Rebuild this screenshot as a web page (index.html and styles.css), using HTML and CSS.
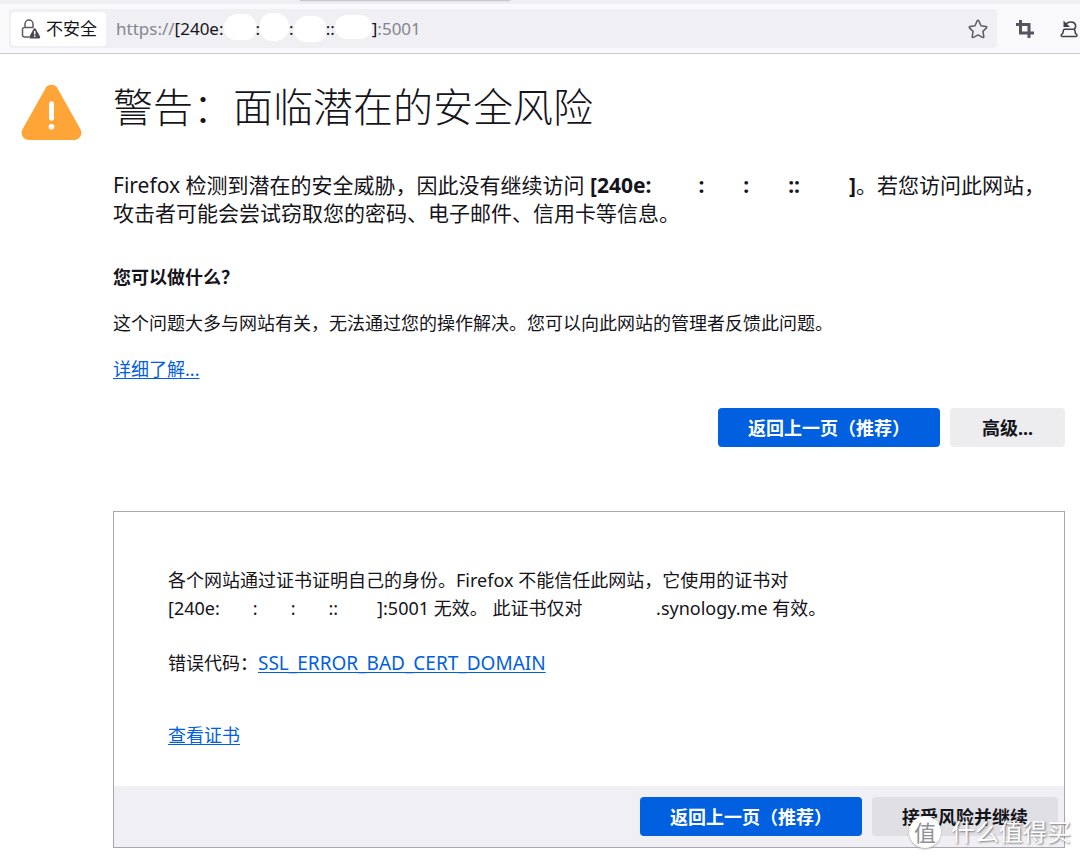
FILE: index.html
```
<!DOCTYPE html>
<html lang="zh-CN">
<head>
<meta charset="utf-8">
<meta name="viewport" content="width=device-width, initial-scale=1">
<title>警告：面临潜在的安全风险</title>
<link rel="stylesheet" href="styles.css">
</head>
<body>
<div class="tabstrip"><div class="tab"></div></div>
<header class="toolbar">
  <div class="urlbar">
    <button class="identity" type="button">
      <svg class="identity-icon" viewBox="0 0 20 22" fill="none" aria-hidden="true">
        <path d="M4 9.500V6a4 4 0 0 1 8 0V9.500M8 19H3.500a2 2 0 0 1-2-2v-5.500a2 2 0 0 1 2-2H12.500" stroke="#5b5b66" stroke-width="1.500"/>
        <path d="M12.700 10.800c.5-.9 1.500-.9 2 0l4.300 7.700c.5 1-.1 2-1 2H9.400c-.9 0-1.500-1-1-2z" fill="#4a4a55"/>
        <path d="M13.700 13v3.500M13.700 17.500v1.500" stroke="#fff" stroke-width="1.500"/>
      </svg>
      <span>不安全</span>
    </button>
    <div class="address"><span class="dim">https://</span>[240e:<span class="mask"></span>:<span class="mask mask-mid"></span>:<span class="mask mask-low"></span>::<span class="mask mask-wide"></span>]<span class="dim">:5001</span></div>
    <button class="icon-button" type="button" aria-label="收藏">
      <svg width="20" height="20" viewBox="0 0 20 20" fill="none" stroke="#5b5b66" stroke-width="1.500" stroke-linejoin="round" aria-hidden="true"><path d="M9.200 1.800Q10 .500 10.800 1.800L13 6.700L18 7.400Q19.400 7.800 18.500 8.900L14.900 12.400L15.800 17.500Q15.900 19 14.500 18.400L10 15.900L5.500 18.400Q4.100 19 4.200 17.500L5.100 12.400L1.500 8.900Q.600 7.800 2 7.400L7 6.700Z"/></svg>
    </button>
  </div>
  <div class="tools">
    <button class="icon-button" type="button" aria-label="截图">
      <svg width="18" height="18" viewBox="0 0 18 18" fill="none" stroke="#55555f" stroke-width="3" aria-hidden="true"><path d="M4.500 0v13H18M0 4.500h13V18"/></svg>
    </button>
    <button class="icon-button" type="button" aria-label="恢复">
      <svg width="18" height="18" viewBox="0 0 18 18" fill="none" stroke="#3f3f49" stroke-width="1.500" aria-hidden="true"><path d="M6 4C9 1 14.500 1.500 15.500 5c.5 2-.3 3.500-1.500 4.500M5 9.200h8.500c.5 0 1 .3 1.200.8l.8 3.500 1.200.8c.4.300.5 2.200-.5 2.200H2c-1 0-1-1.900-.5-2.200l1.200-.8.8-3.500c.2-.5.8-.8 1.500-.8z"/><path d="M3.500.5v6.500H10z" fill="#3f3f49" stroke="none"/></svg>
    </button>
  </div>
</header>
<main class="page">
  <svg class="warning" viewBox="0 0 62 58" aria-hidden="true"><path d="M24.500 5C27-.500 35-.500 37.500 5L60.500 46C63 51 60 57 54 57H8C2 57-1 51 1.500 46Z" fill="#ffa436"/><path d="M31 20v15" stroke="#fff" stroke-width="5" stroke-linecap="round"/><circle cx="31" cy="43.500" r="2.900" fill="#fff"/></svg>
  <div class="content">
    <h1>警告：面临潜在的安全风险</h1>
    <p class="intro">Firefox 检测到潜在的安全威胁，因此没有继续访问 <b>[240e:<span class="gap gap-first"></span>:<span class="gap"></span>:<span class="gap"></span>::<span class="gap gap-wide"></span>]</b>。若您访问此网站，攻击者可能会尝试窃取您的密码、电子邮件、信用卡等信息。</p>
    <h2>您可以做什么？</h2>
    <p class="advice">这个问题大多与网站有关，无法通过您的操作解决。您可以向此网站的管理者反馈此问题。</p>
    <p class="more"><a href="#">详细了解...</a></p>
    <div class="actions">
      <button class="button primary" type="button">返回上一页（推荐）</button>
      <button class="button" type="button">高级...</button>
    </div>
    <section class="panel">
      <div class="details">
        <p>各个网站通过证书证明自己的身份。Firefox 不能信任此网站，它使用的证书对<br>[240e:<span class="gap-s"></span>:<span class="gap-s"></span>:<span class="gap-s"></span>::<span class="gap-s gap-s-wide"></span>]:5001 无效。 此证书仅对 <span class="gap-host"></span>.synology.me 有效。</p>
        <p class="code">错误代码：<a href="#">SSL_ERROR_BAD_CERT_DOMAIN</a></p>
        <p class="cert"><a href="#">查看证书</a></p>
      </div>
      <div class="footer">
        <button class="button primary" type="button">返回上一页（推荐）</button>
        <button class="button" type="button">接受风险并继续</button>
      </div>
    </section>
  </div>
</main>
<div class="watermark"><span class="badge">值</span><span>什么值得买</span></div>
</body>
</html>
```
FILE: styles.css
```
* { box-sizing: border-box; }
body {
  position: relative;
  margin: 0;
  background: #fff;
  color: #15141a;
  font-family: "Noto Sans", "Noto Sans CJK SC", sans-serif;
  font-size: 18px;
  line-height: 28px;
}
button { font: inherit; color: inherit; border: 0; padding: 0; background: none; }
h1, h2, p { margin: 0; }
a { color: #0060df; text-underline-offset: 2px; text-decoration-skip-ink: none; }

.tabstrip { height: 4px; padding-left: 300px; background: #f0f0f4; overflow: hidden; }
.tab { width: 210px; height: 1px; background: #c8c8cd; box-shadow: 0 0 2px #c0c0c6; }
.toolbar {
  display: flex;
  align-items: center;
  gap: 19px;
  padding: 5px 2px 5px 9px;
  background: #f9f9fb;
  border-bottom: 1px solid #ccccd0;
}
.tools { display: flex; gap: 26px; }
.urlbar {
  flex: 1;
  display: flex;
  align-items: center;
  height: 39px;
  padding: 0 9px 0 2px;
  background: #f0f0f4;
  border-radius: 4px;
}
.identity {
  display: flex;
  align-items: center;
  gap: 5px;
  height: 34px;
  padding: 0 9px 0 10px;
  background: #fff;
  border-radius: 4px;
  font-size: 17px;
}
.identity-icon { width: 20px; height: 22px; }
.address { flex: 1; display: flex; align-items: center; padding-left: 10px; font-size: 17px; }
.dim { color: #85858d; }
.mask { width: 32px; height: 26px; margin-bottom: 4px; background: #fff; border-radius: 14px 12px 10px 12px; }
.mask-mid { width: 29px; height: 28px; margin-bottom: 3px; border-radius: 12px 14px 14px 12px; }
.mask-low { width: 32px; margin-bottom: 0; }
.mask-wide { width: 37px; height: 24px; border-radius: 12px; }
.icon-button { display: flex; }

.page { display: flex; gap: 31px; padding: 30px 15px 10px 21px; }
.warning { flex: none; width: 61px; height: 57px; }
.content { flex: 1; min-width: 0; }
h1 { font-size: 40px; font-weight: 300; line-height: 46px; }
.intro { margin-top: 41px; padding-right: 10px; font-size: 21px; }
.gap { display: inline-block; width: 39px; }
.gap-first { width: 47px; }
.gap-wide { width: 49px; }
h2 { margin-top: 36px; font-size: 18px; line-height: 28px; }
.advice, .more { margin-top: 18px; }
.actions { display: flex; justify-content: flex-end; gap: 10px; margin-top: 25px; }
.button {
  min-width: 115px;
  height: 39px;
  padding: 0 30px;
  border-radius: 4px;
  background: #ededef;
  font-weight: 700;
}
.primary { background: #0060df; color: #fff; }
.panel { margin-top: 64px; border: 1px solid #a8a8ac; }
.details { padding: 54px 54px 37px; }
.gap-s { display: inline-block; width: 33px; }
.gap-s-wide { width: 39px; }
.gap-host { display: inline-block; width: 69px; }
.code { margin-top: 27px; }
.code a { font-size: 19px; }
.cert { margin-top: 44px; }
.footer { display: flex; justify-content: flex-end; gap: 10px; padding: 11px 6px; background: #f0f0f4; }
.footer .button:not(.primary) { background: #e0e0e4; }

.watermark {
  position: absolute;
  right: 9px;
  bottom: 10px;
  display: flex;
  align-items: center;
  gap: 10px;
  color: #fff;
  font-size: 24px;
  line-height: 32px;
  text-shadow: 1px 1px 2px #77777c;
  pointer-events: none;
}
.badge {
  width: 32px;
  height: 32px;
  border-radius: 50%;
  background: #fff;
  color: #919195;
  font-size: 22px;
  text-align: center;
  text-shadow: none;
  box-shadow: 0 1px 2px #aaaaae;
}
```
